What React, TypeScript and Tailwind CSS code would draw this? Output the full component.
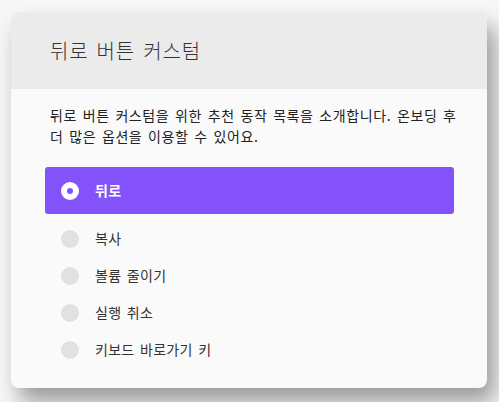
import React from "react";

const items = ["복사", "볼륨 줄이기", "실행 취소", "키보드 바로가기 키"];

export default function App() {
  return (
    <div
      className="w-[499px] h-[402px] bg-[#f7f7f7] overflow-hidden pt-[12px] pl-[11px]"
      style={{ fontFamily: '"Noto Sans CJK KR", "Noto Sans", sans-serif' }}
    >
      <div className="w-[476px] h-[376px] rounded-[8px] bg-[#fafafa] overflow-hidden shadow-[8px_14px_22px_rgba(0,0,0,0.38)] flex flex-col">
        <div className="h-[77px] bg-[#ebebeb] flex items-center pl-[39px] text-[20px] font-light tracking-[0.8px] [word-spacing:3px] text-[#333333]">
          뒤로 버튼 커스텀
        </div>
        <div className="pt-[16px] pl-[39px] pr-[24px] text-[14px] leading-[21px] tracking-[0.6px] [word-spacing:2px] text-[#222222]">
          뒤로 버튼 커스텀을 위한 추천 동작 목록을 소개합니다. 온보딩 후 더 많은 옵션을 이용할 수 있어요.
        </div>
        <div className="mt-[20px] px-[34px] pr-[33px] flex flex-col">
          <div className="h-[47px] rounded-[3px] bg-[#8452fa] flex items-center pl-[16px] gap-[16px]">
            <div className="w-[18px] h-[18px] rounded-full bg-white flex items-center justify-center">
              <div className="w-[6px] h-[6px] rounded-full bg-[#8452fa]" />
            </div>
            <span className="text-[14px] font-bold tracking-[0.3px] text-white">뒤로</span>
          </div>
          <div className="mt-[6px] flex flex-col">
            {items.map((t) => (
              <div key={t} className="h-[37px] flex items-center pl-[16px] gap-[16px]">
                <div className="w-[18px] h-[18px] rounded-full bg-[#e1e1e3]" />
                <span className="text-[14px] tracking-[0.3px] [word-spacing:2px] text-[#333333]">{t}</span>
              </div>
            ))}
          </div>
        </div>
      </div>
    </div>
  );
}
